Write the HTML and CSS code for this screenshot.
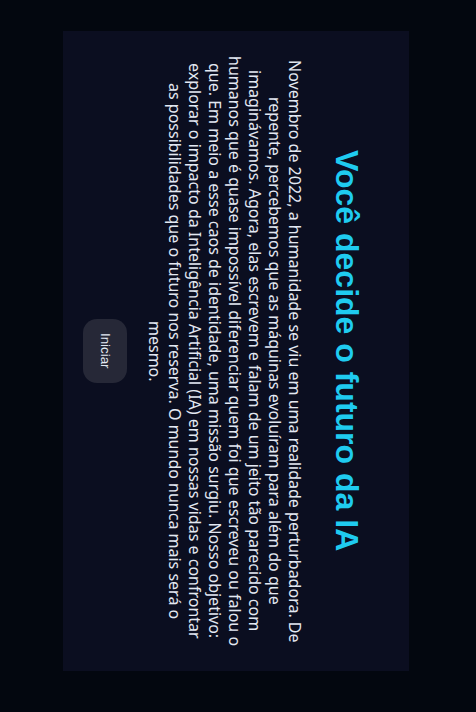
FILE: index.html
```html
<!DOCTYPE html>
<html lang="pt-BR">
<head>
<meta charset="utf-8">
<title>Você decide o futuro da IA</title>
<link rel="stylesheet" href="styles.css">
</head>
<body>
<main class="panel">
  <h1 class="title">Você decide o futuro da IA</h1>
  <p class="intro">Novembro de 2022, a humanidade se viu em uma realidade perturbadora. De repente, percebemos que as máquinas evoluíram para além do que imaginávamos. Agora, elas escrevem e falam de um jeito tão parecido com humanos que é quase impossível diferenciar quem foi que escreveu ou falou o que. Em meio a esse caos de identidade, uma missão surgiu. Nosso objetivo: explorar o impacto da Inteligência Artificial (IA) em nossas vidas e confrontar as possibilidades que o futuro nos reserva. O mundo nunca mais será o mesmo.</p>
  <button class="start" type="button">Iniciar</button>
</main>
</body>
</html>
```
FILE: styles.css
```css
html, body {
  margin: 0;
  padding: 0;
}

body {
  width: 476px;
  height: 712px;
  box-sizing: border-box;
  padding: 31px 0 0 63px;
  background: #03070f;
  overflow: hidden;
  font-family: "Noto Sans", "Liberation Sans", sans-serif;
}

.panel {
  writing-mode: vertical-rl;
  width: 346px;
  height: 640px;
  box-sizing: border-box;
  background: #0b0e20;
  padding-block-start: 44px;
  padding-inline: 23.5px;
  display: flex;
  flex-direction: column;
  text-align: center;
}

.title {
  margin: 0;
  font-family: "Liberation Sans", Arial, sans-serif;
  font-size: 32px;
  line-height: 37px;
  font-weight: 700;
  color: #1fcbf0;
}

.intro {
  margin: 0;
  margin-block-start: 23.5px;
  font-size: 16px;
  line-height: 20px;
  color: #e3e8f2;
}

.start {
  align-self: center;
  margin-block-start: 17.5px;
  inline-size: 64px;
  block-size: 44px;
  padding: 0;
  border: none;
  border-radius: 14px;
  background: #262837;
  color: #e3e8f2;
  font-family: "Liberation Sans", Arial, sans-serif;
  font-size: 13.33px;
  cursor: pointer;
}
```
